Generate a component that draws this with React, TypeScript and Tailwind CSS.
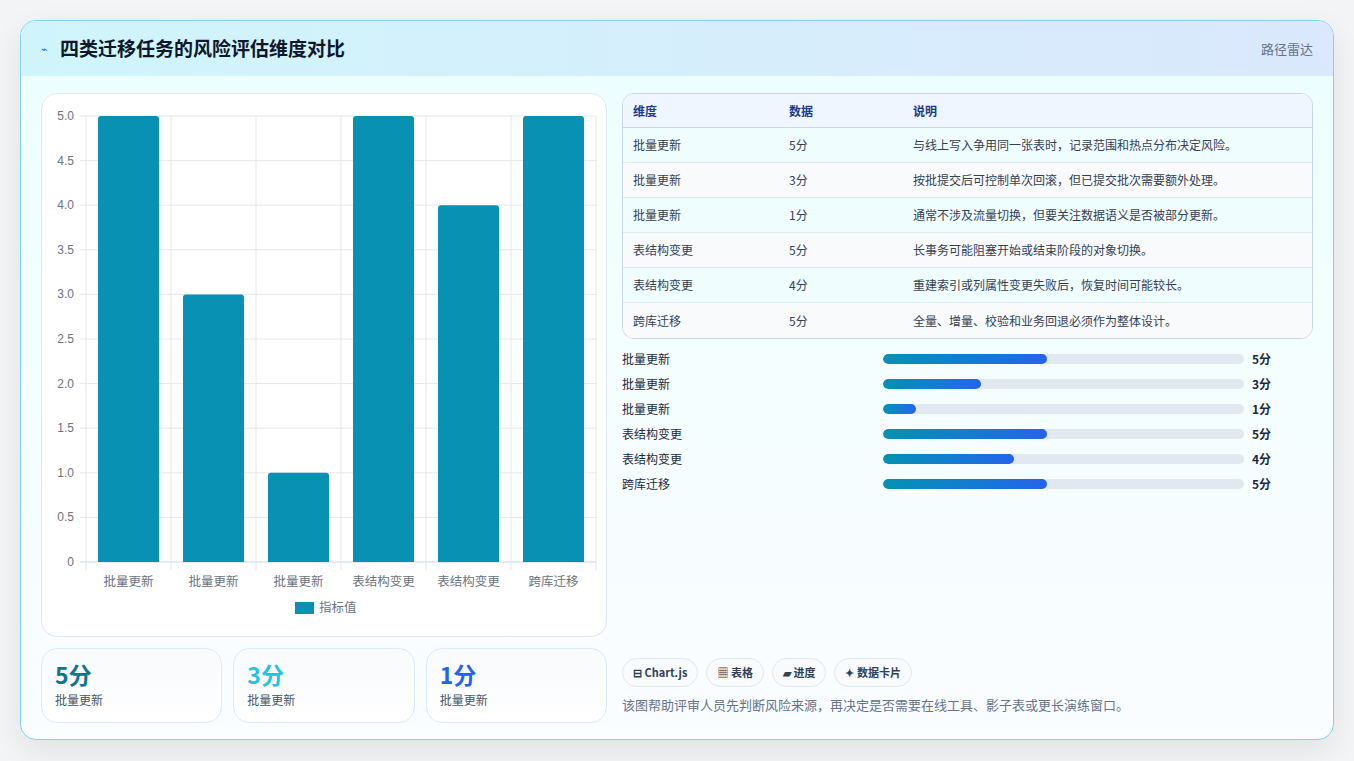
import React from "react";

const rows = [
  ["批量更新", 5, "与线上写入争用同一张表时，记录范围和热点分布决定风险。"],
  ["批量更新", 3, "按批提交后可控制单次回滚，但已提交批次需要额外处理。"],
  ["批量更新", 1, "通常不涉及流量切换，但要关注数据语义是否被部分更新。"],
  ["表结构变更", 5, "长事务可能阻塞开始或结束阶段的对象切换。"],
  ["表结构变更", 4, "重建索引或列属性变更失败后，恢复时间可能较长。"],
  ["跨库迁移", 5, "全量、增量、校验和业务回退必须作为整体设计。"],
] as const;

function Chart() {
  const x0 = 44, x1 = 554, yTop = 22, yBot = 468;
  const h = yBot - yTop;
  const cw = (x1 - x0) / 6;
  const ticks = [5, 4.5, 4, 3.5, 3, 2.5, 2, 1.5, 1, 0.5, 0];
  return (
    <svg width="566" height="543" className="block">
      {ticks.map((t) => {
        const y = yBot - (t / 5) * h;
        return (
          <g key={t}>
            <line x1={x0 - 6} x2={x1} y1={y} y2={y} stroke={t === 0 ? "#cbd5e1" : "#e5e7eb"} />
            <text x={x0 - 12} y={y + 4} textAnchor="end" fontSize="12" fill="#6b7280" fontFamily="Liberation Sans, sans-serif">
              {t === 0 ? "0" : t.toFixed(1)}
            </text>
          </g>
        );
      })}
      {Array.from({ length: 7 }).map((_, i) => (
        <line key={i} x1={x0 + i * cw} x2={x0 + i * cw} y1={yTop} y2={yBot + 8} stroke="#e5e7eb" />
      ))}
      {rows.map((r, i) => {
        const bh = (r[1] / 5) * h;
        const cx = x0 + i * cw + cw / 2;
        return (
          <g key={i}>
            <rect x={cx - 30.5} y={yBot - bh} width="61" height={bh} rx="3" fill="#0891b2" />
            <rect x={cx - 30.5} y={yBot - 4} width="61" height="4" fill="#0891b2" />
            <text x={cx} y={yBot + 24} textAnchor="middle" fontSize="12.5" fill="#6b7280" fontFamily="Noto Sans CJK SC, sans-serif">{r[0]}</text>
          </g>
        );
      })}
      <rect x="253" y="508" width="19" height="12" fill="#0891b2" />
      <text x="277" y="518" fontSize="12.5" fill="#6b7280" fontFamily="Noto Sans CJK SC, sans-serif">指标值</text>
    </svg>
  );
}

export default function App() {
  return (
    <div className="w-[1354px] h-[761px] bg-[#f3f4f6] p-5 pb-0" style={{ fontFamily: "'Noto Sans CJK SC', 'Noto Sans', sans-serif" }}>
      <div className="h-[720px] rounded-2xl border border-[#7dd3e8] bg-gradient-to-b from-[#ecfeff] to-[#fbfdff] shadow-[0_10px_30px_rgba(0,0,0,0.08)] overflow-hidden flex flex-col">
        <div className="h-[55px] shrink-0 flex items-center justify-between px-5 bg-gradient-to-r from-[#cff5fb] to-[#dbe8fd]">
          <div className="flex items-center gap-3">
            <span className="text-[11px] text-[#2563eb]">⌁</span>
            <span className="text-[19px] font-bold text-[#0f172a]">四类迁移任务的风险评估维度对比</span>
          </div>
          <span className="text-[13px] text-[#64748b]">路径雷达</span>
        </div>
        <div className="flex gap-[15px] px-5 pt-[17px]">
          <div className="w-[566px] flex flex-col gap-[11px]">
            <div className="h-[544px] rounded-2xl border border-[#e2e8f0] bg-white overflow-hidden">
              <Chart />
            </div>
            <div className="grid grid-cols-3 gap-[11px]">
              {[["5分", "text-[#0e7490]"], ["3分", "text-[#22c4e0]"], ["1分", "text-[#2563eb]"]].map(([v, c], i) => (
                <div key={i} className="h-[75px] rounded-2xl border border-[#dbeafe] bg-gradient-to-b from-[#f8fafc] to-white px-[13px] pt-[10px]">
                  <div className={`text-[23px] font-bold leading-[30px] ${c}`}>{v}</div>
                  <div className="text-[12px] text-[#475569] mt-[2px]">批量更新</div>
                </div>
              ))}
            </div>
          </div>
          <div className="flex-1 flex flex-col">
            <div className="rounded-xl border border-[#cbd5e1] overflow-hidden bg-white">
              <div className="flex h-[34px] items-center bg-[#eff6ff] border-b border-[#cbd5e1] text-[12px] font-semibold text-[#1e3a8a]">
                <div className="w-[166px] pl-[10px]">维度</div>
                <div className="w-[124px]">数据</div>
                <div>说明</div>
              </div>
              {rows.map((r, i) => (
                <div key={i} className={`flex h-[35px] items-center text-[12px] text-[#334155] ${i < 5 ? "border-b border-[#e2e8f0]" : ""} ${i % 2 ? "bg-[#f8fafc]" : "bg-[#f0fdff]"}`}>
                  <div className="w-[166px] pl-[10px]">{r[0]}</div>
                  <div className="w-[124px]">{r[1]}分</div>
                  <div>{r[2]}</div>
                </div>
              ))}
            </div>
            <div className="mt-[11px] flex flex-col gap-[7px]">
              {rows.map((r, i) => (
                <div key={i} className="flex items-center h-[18px] text-[12px]">
                  <div className="w-[261px] text-[#1e293b]">{r[0]}</div>
                  <div className="w-[361px] h-[10px] rounded-full bg-[#e2e8f0] overflow-hidden">
                    <div className="h-full rounded-full bg-gradient-to-r from-[#0891b2] to-[#2563eb]" style={{ width: `${(r[1] / 11) * 100}%` }} />
                  </div>
                  <div className="ml-2 font-bold text-[#1e293b]">{r[1]}分</div>
                </div>
              ))}
            </div>
            <div className="mt-auto flex gap-2 mb-[8px]">
              {["⊟ Chart.js", "▦ 表格", "▰ 进度", "✦ 数据卡片"].map((t) => (
                <span key={t} className="h-[29px] px-[10px] flex items-center rounded-full border border-[#e2e8f0] bg-[#f8fafc] text-[11px] font-semibold text-[#334155]">{t}</span>
              ))}
            </div>
            <div className="text-[13px] text-[#64748b] h-[28px]">该图帮助评审人员先判断风险来源，再决定是否需要在线工具、影子表或更长演练窗口。</div>
          </div>
        </div>
      </div>
    </div>
  );
}
